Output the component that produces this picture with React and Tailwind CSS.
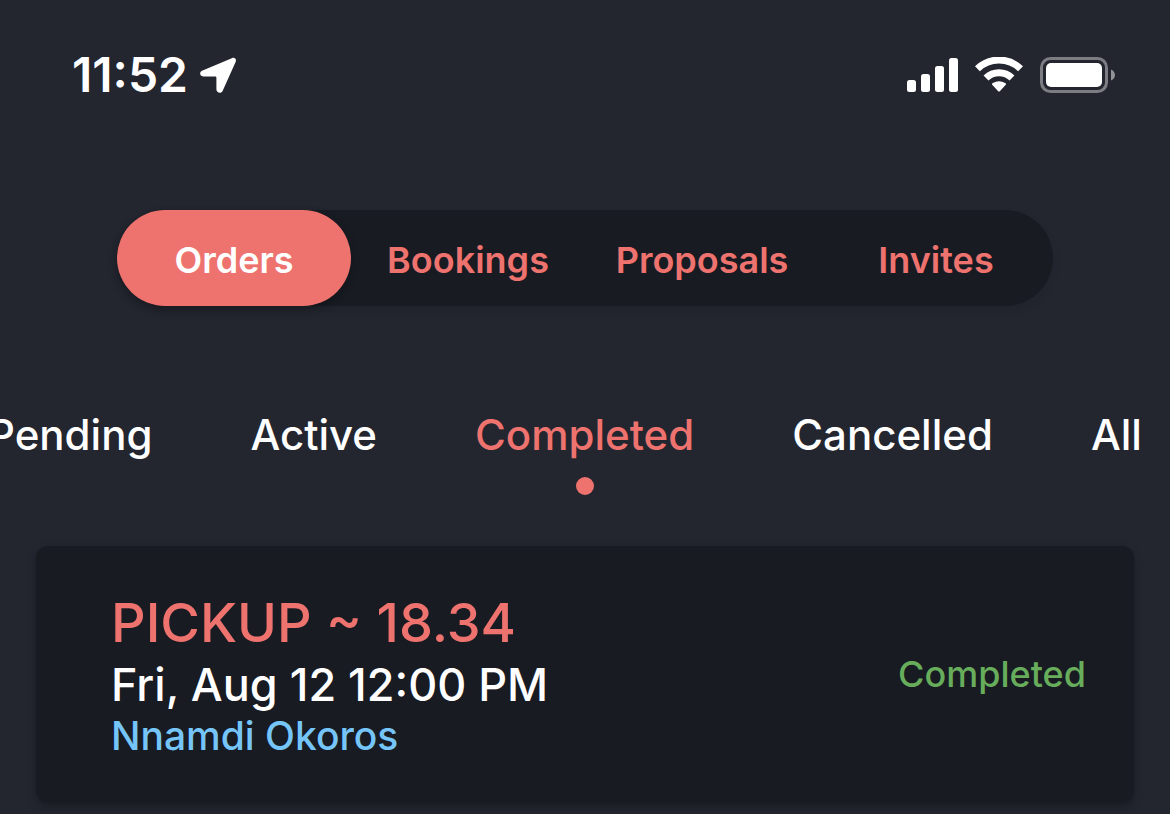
import React, { useState } from 'react';
import clsx from 'clsx';

const sections = ['Orders', 'Bookings', 'Proposals', 'Invites'];
const filters = ['Pending', 'Active', 'Completed', 'Cancelled', 'All'];

const orders = [
  {
    id: 1,
    title: 'PICKUP ~ 18.34',
    date: 'Fri, Aug 12 12:00 PM',
    customer: 'Nnamdi Okoros',
    status: 'Completed',
  },
];

const StatusBar = () => (
  <header className="flex items-center justify-between pl-[72px] pr-[54px] pt-[45px]">
    <div className="flex items-center gap-3">
      <time className="text-[48px] leading-[60px] font-semibold">11:52</time>
      <svg className="h-9 w-9" viewBox="0 0 36 36" fill="currentColor" aria-hidden="true">
        <path d="M31.8 1.2 C34.6 0 36.9 2.1 35.6 4.9 L22.6 34 C21.4 36.8 16.4 36.2 16.4 32.6 V20.8 C16.4 19.8 16 19.4 15 19.4 H3.2 C-.2 19.4 -1 15.2 2 13.8 Z" />
      </svg>
    </div>

    <div className="flex items-center gap-[17px]">
      {/* Cellular */}
      <svg className="h-[34px] w-[51px]" viewBox="0 0 51 34" fill="currentColor" aria-hidden="true">
        <rect x="0" y="22" width="9" height="12" rx="2.5" />
        <rect x="14" y="16" width="9" height="18" rx="2.5" />
        <rect x="28" y="8" width="9" height="26" rx="2.5" />
        <rect x="42" y="0" width="9" height="34" rx="2.5" />
      </svg>
      {/* Wifi */}
      <svg className="h-9 w-12" viewBox="0 0 48 36" aria-hidden="true">
        <g fill="none" stroke="currentColor" strokeWidth="7">
          <path d="M2.4 11.8 A31 31 0 0 1 45.6 11.8" />
          <path d="M11 21 A18.6 18.6 0 0 1 37 21" />
        </g>
        <path fill="currentColor" d="M17.2 27.8 Q16.4 26.8 17.8 26.1 Q24 22.6 30.2 26.1 Q31.6 26.8 30.8 27.8 L24.8 34.2 Q24 35 23.2 34.2 Z" />
      </svg>
      {/* Battery */}
      <svg className="h-9 w-[76px]" viewBox="0 0 76 36" fill="currentColor" aria-hidden="true">
        <rect x="1.5" y="1.5" width="65" height="33" rx="9" fill="none" stroke="#7c7d82" strokeWidth="3" />
        <rect x="6" y="6" width="56" height="24" rx="5" />
        <path fill="#919296" d="M71 12.4 Q75 14.4 75 18 Q75 21.6 71 23.6 Z" />
      </svg>
    </div>
  </header>
);

const OrderCard = ({ order }) => (
  <li className="flex items-center justify-between rounded-xl bg-[#181b22] pl-[75px] pr-12 pt-[47px] pb-12 shadow-[0_4px_10px_rgba(0,0,0,0.25)]">
    <div>
      <h2 className="text-[54px] leading-[60px] font-medium text-[#ee736f]">{order.title}</h2>
      <p className="text-[45px] leading-[64px] font-medium">{order.date}</p>
      <p className="text-[39px] leading-[38px] font-medium text-[#75c5f9]">{order.customer}</p>
    </div>
    <span className="text-[36px] leading-[48px] font-medium text-[#67ad5b]">{order.status}</span>
  </li>
);

const App = () => {
  const [section, setSection] = useState('Orders');
  const [filter, setFilter] = useState('Completed');

  return (
    <div className="min-h-screen overflow-hidden bg-[#23262f] font-['Inter',sans-serif] text-white">
      <StatusBar />

      {/* Section switch */}
      <nav className="mx-auto mt-[105px] grid w-4/5 grid-cols-4 rounded-full bg-[#181b22] shadow-[0_4px_8px_rgba(0,0,0,0.08)]">
        {sections.map((name) => (
          <button
            key={name}
            type="button"
            onClick={() => setSection(name)}
            className={clsx(
              'h-24 rounded-full pt-1 text-[36px] font-semibold',
              section === name
                ? 'bg-[#ee736f] text-white shadow-[0_4px_8px_rgba(0,0,0,0.25)]'
                : 'text-[#ee736f]'
            )}
          >
            {name}
          </button>
        ))}
      </nav>

      {/* Status filter */}
      <nav className="-ml-3 mt-[104px] flex w-max gap-[98px]">
        {filters.map((name) => (
          <button
            key={name}
            type="button"
            onClick={() => setFilter(name)}
            className={clsx(
              'flex flex-col items-center gap-[17px] text-[42px] leading-[50px] font-medium',
              filter === name && 'text-[#ee736f]'
            )}
          >
            {name}
            {filter === name && <span className="h-[18px] w-[18px] rounded-full bg-[#ee736f]" />}
          </button>
        ))}
      </nav>

      <ul className="mx-9 mt-[51px] mb-2 space-y-6">
        {orders.map((order) => (
          <OrderCard key={order.id} order={order} />
        ))}
      </ul>
    </div>
  );
};

export default App;
